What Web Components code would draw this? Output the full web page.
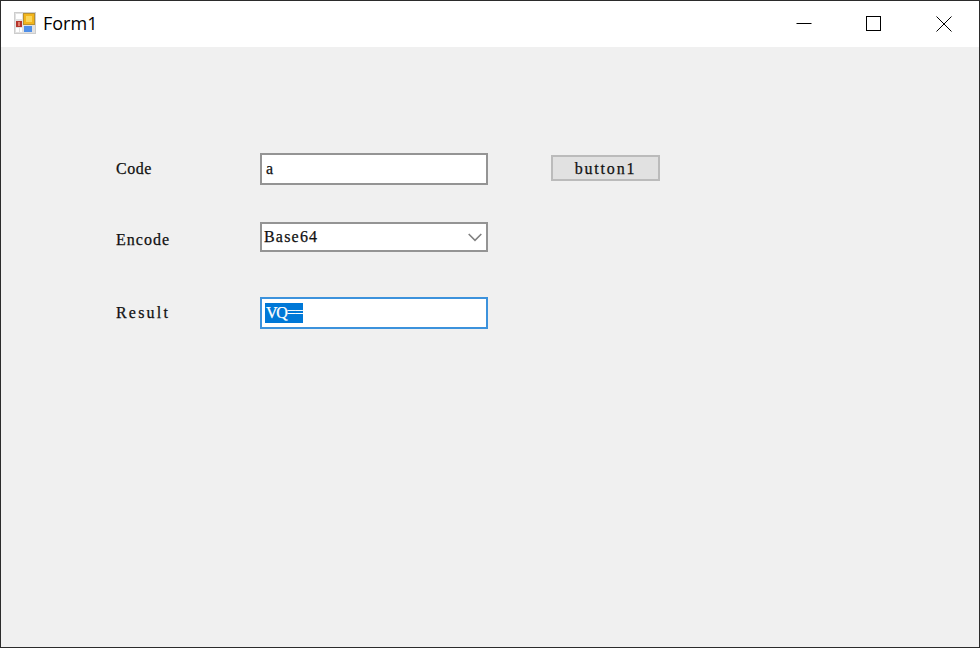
<!DOCTYPE html>
<html>
<head>
<meta charset="utf-8">
<title>Form1</title>
<style>
    html, body { margin: 0; padding: 0; }
</style>
</head>
<body>
<win-form>
    <field-label style="letter-spacing: 0.5px">Code</field-label>
    <text-box>a</text-box>
    <win-button style="letter-spacing: 1.8px">button1</win-button>

    <field-label style="margin-top: 9px; letter-spacing: 1px">Encode</field-label>
    <combo-box style="letter-spacing: 1.2px">Base64</combo-box>
    <span></span>

    <field-label style="margin-top: 7px; letter-spacing: 2.2px">Result</field-label>
    <text-box focused style="letter-spacing: -1.2px"><span slot="selected">VQ==</span></text-box>
    <span></span>
</win-form>

<script>
// Общий стиль текста контролов формы: узкая засечка, как растровый шрифт в оригинале
const CONTROL_FONT = `
    color: #111;
    font: 16px/18px "Liberation Serif", serif;
    -webkit-text-stroke: 0.25px #111;
`;

class TitleBar extends HTMLElement {
    constructor() {
        super();
        this.attachShadow({ mode: 'open' });
    }

    connectedCallback() {
        this.shadowRoot.innerHTML = `
            <style>
                :host {
                    display: flex;
                    align-items: center;
                    height: 46px;
                    background: #fff;
                    color: #000;
                    font: 18px "Open Sans", "Noto Sans", sans-serif;
                }
                .icon { width: 22px; height: 22px; margin: 0 0 2px 13px; flex: none; }
                .name { margin: 0 0 2px 7px; flex: 1; line-height: 44px; }
                .ctrl {
                    width: 70px;
                    height: 46px;
                    display: flex;
                    align-items: center;
                    justify-content: center;
                }
                svg { display: block; }
            </style>
            <svg class="icon" viewBox="0 0 22 22">
                <rect x="0.5" y="0.5" width="21" height="21" fill="#e2e2e2" stroke="#cdcdcd"/>
                <rect x="2" y="2" width="6" height="5" fill="#fff"/>
                <rect x="2" y="9" width="6" height="6" fill="#b5352c"/>
                <rect x="4" y="10" width="2" height="4" fill="#e0806f"/>
                <rect x="2" y="16" width="3" height="4" fill="#fff"/>
                <rect x="6" y="16" width="2" height="4" fill="#fff"/>
                <rect x="9.5" y="1.5" width="11" height="11" fill="#f2b51c" stroke="#b9912f"/>
                <rect x="12" y="4" width="6" height="6" fill="#fbd65a"/>
                <rect x="10" y="14" width="8" height="6" fill="#4f8fe8"/>
            </svg>
            <div class="name">Form1</div>
            <div class="ctrl">
                <svg width="16" height="16" viewBox="0 0 16 16"><path d="M0.5 7.5H15.5" stroke="#000" fill="none"/></svg>
            </div>
            <div class="ctrl">
                <svg width="16" height="16" viewBox="0 0 16 16"><rect x="0.5" y="0.5" width="14" height="14" stroke="#000" fill="none"/></svg>
            </div>
            <div class="ctrl">
                <svg width="16" height="16" viewBox="0 0 16 16"><path d="M0.5 0.5L15.5 15.5M15.5 0.5L0.5 15.5" stroke="#000" fill="none"/></svg>
            </div>
        `;
    }
}

class WinForm extends HTMLElement {
    constructor() {
        super();
        this.attachShadow({ mode: 'open' });
    }

    connectedCallback() {
        this.shadowRoot.innerHTML = `
            <style>
                :host {
                    display: flex;
                    flex-direction: column;
                    box-sizing: border-box;
                    width: 980px;
                    height: 648px;
                    border: 1px solid #2b2b2b;
                    background: #f0f0f0;
                    overflow: hidden;
                }
                .client {
                    display: grid;
                    grid-template-columns: 144px 228px 172px;
                    grid-template-rows: 69px 75px 32px;
                    padding: 106px 0 0 115px;
                    align-items: start;
                }
                ::slotted(field-label) { margin-top: 7px; }
                ::slotted(win-button) { margin: 2px 0 0 63px; }
            </style>
            <title-bar></title-bar>
            <div class="client"><slot></slot></div>
        `;
    }
}

class FieldLabel extends HTMLElement {
    constructor() {
        super();
        this.attachShadow({ mode: 'open' });
    }

    connectedCallback() {
        this.shadowRoot.innerHTML = `
            <style>
                :host { display: block; ${CONTROL_FONT} }
            </style>
            <slot></slot>
        `;
    }
}

class TextBox extends HTMLElement {
    constructor() {
        super();
        this.attachShadow({ mode: 'open' });
    }

    connectedCallback() {
        const focused = this.hasAttribute('focused');
        this.shadowRoot.innerHTML = `
            <style>
                :host {
                    display: flex;
                    align-items: center;
                    box-sizing: border-box;
                    height: 32px;
                    width: 228px;
                    padding: 0 3px 0 ${focused ? 3 : 4}px;
                    background: #fff;
                    border: 2px solid ${focused ? '#3c92dc' : '#949494'};
                    ${CONTROL_FONT}
                }
                ::slotted([slot="selected"]) {
                    background: #0078d7;
                    color: #fff;
                    -webkit-text-stroke: 0.25px #fff;
                    padding: 1px 1px;
                }
            </style>
            <slot></slot><slot name="selected"></slot>
        `;
    }
}

class ComboBox extends HTMLElement {
    constructor() {
        super();
        this.attachShadow({ mode: 'open' });
    }

    connectedCallback() {
        this.shadowRoot.innerHTML = `
            <style>
                :host {
                    display: flex;
                    align-items: center;
                    justify-content: space-between;
                    box-sizing: border-box;
                    height: 30px;
                    width: 228px;
                    padding: 0 3px 0 2px;
                    background: #fff;
                    border: 2px solid #949494;
                    ${CONTROL_FONT}
                }
                svg { display: block; margin: 1px 1px 0 0; }
            </style>
            <slot></slot>
            <svg width="14" height="9" viewBox="0 0 14 9">
                <path d="M0.7 1L7 7.3L13.3 1" stroke="#808080" stroke-width="1.6" fill="none"/>
            </svg>
        `;
    }
}

class WinButton extends HTMLElement {
    constructor() {
        super();
        this.attachShadow({ mode: 'open' });
    }

    connectedCallback() {
        this.shadowRoot.innerHTML = `
            <style>
                :host {
                    display: flex;
                    align-items: center;
                    justify-content: center;
                    box-sizing: border-box;
                    height: 26px;
                    padding-top: 2px;
                    background: #e1e1e1;
                    border: 2px solid #bbb;
                    ${CONTROL_FONT}
                }
            </style>
            <slot></slot>
        `;
    }
}

customElements.define('title-bar', TitleBar);
customElements.define('win-form', WinForm);
customElements.define('field-label', FieldLabel);
customElements.define('text-box', TextBox);
customElements.define('combo-box', ComboBox);
customElements.define('win-button', WinButton);
</script>
</body>
</html>
